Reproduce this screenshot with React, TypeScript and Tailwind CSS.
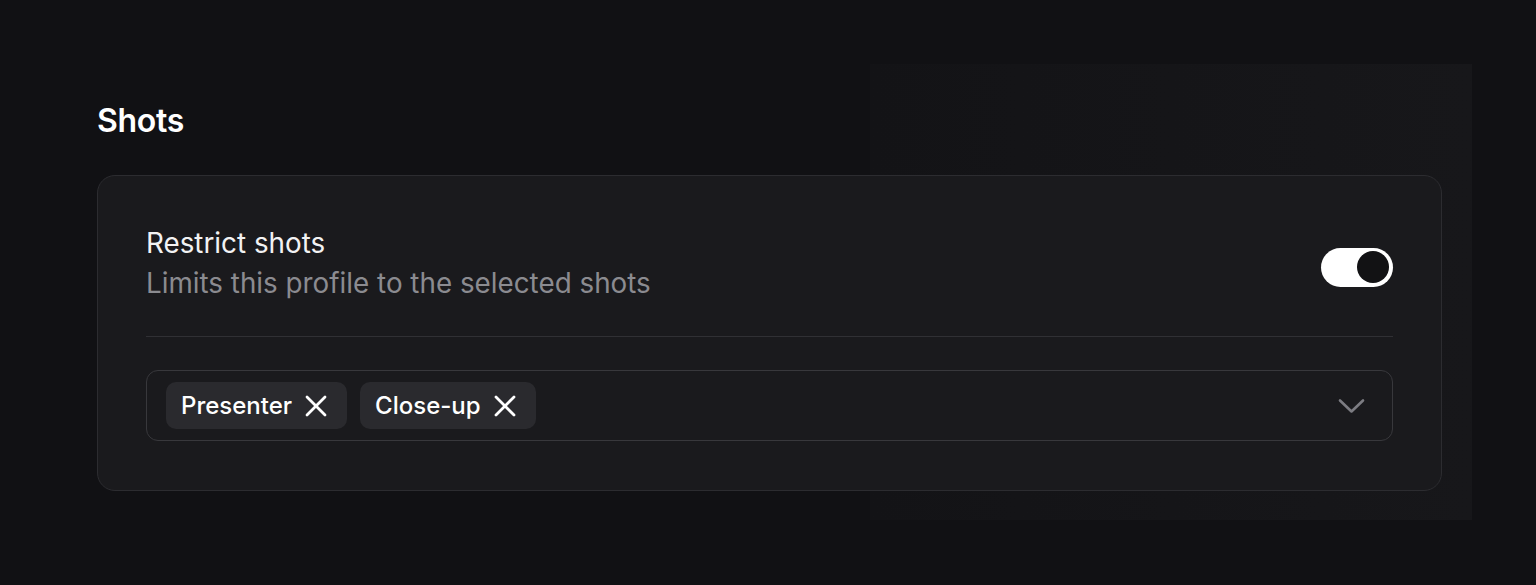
import React from "react";

function XIcon() {
  return (
    <svg width="22" height="22" viewBox="0 0 22 22" fill="none" stroke="currentColor" strokeWidth="2.8" strokeLinecap="round" strokeLinejoin="round">
      <path d="M2 2 20 20" />
      <path d="M20 2 2 20" />
    </svg>
  );
}

function Chevron() {
  return (
    <svg width="27" height="16" viewBox="0 0 27 16" fill="none" stroke="currentColor" strokeWidth="2.6" strokeLinecap="round" strokeLinejoin="round">
      <path d="M2 2.5 13.5 13.5 25 2.5" />
    </svg>
  );
}

function Chip({ label }: { label: string }) {
  return (
    <div className="flex h-[47px] items-center gap-[13px] rounded-[10px] bg-[#2a2a2e] pl-[15px] pr-[20px] text-[24px] font-medium text-white">
      <span>{label}</span>
      <XIcon />
    </div>
  );
}

export default function App() {
  return (
    <div
      className="min-h-[585px] w-full bg-[#111114] bg-[linear-gradient(to_right,#131316,#17171a)] bg-no-repeat bg-[size:602px_456px] bg-[position:870px_64px] px-[97px] pt-[99px] text-white"
      style={{ fontFamily: "Inter, 'Noto Sans', sans-serif" }}
    >
      <h2 className="text-[32px] font-semibold leading-[44px] tracking-[-0.01em]">Shots</h2>
      <div className="mt-[32px] w-[1345px] rounded-[18px] border border-[#2c2c30] bg-[#1a1a1d] px-[48px] pb-[49px] pt-[47px]">
        <div className="flex items-center justify-between pb-[33px]">
          <div>
            <div className="text-[27.8px] leading-[40px] text-[#f2f2f3]">Restrict shots</div>
            <div className="text-[27.8px] leading-[40px] text-[#8b8b90]">Limits this profile to the selected shots</div>
          </div>
          <div className="mt-[8px] flex h-[39px] w-[72px] items-center justify-end rounded-full bg-white pr-[4px]">
            <div className="h-[32px] w-[32px] rounded-full bg-[#121214]" />
          </div>
        </div>
        <div className="h-px w-full bg-[#303034]" />
        <div className="mt-[33px] flex h-[71px] items-center justify-between rounded-[12px] border border-[#38383c] pl-[19px] pr-[27px]">
          <div className="flex items-center gap-[13px]">
            <Chip label="Presenter" />
            <Chip label="Close-up" />
          </div>
          <div className="text-[#7c7c82]">
            <Chevron />
          </div>
        </div>
      </div>
    </div>
  );
}
